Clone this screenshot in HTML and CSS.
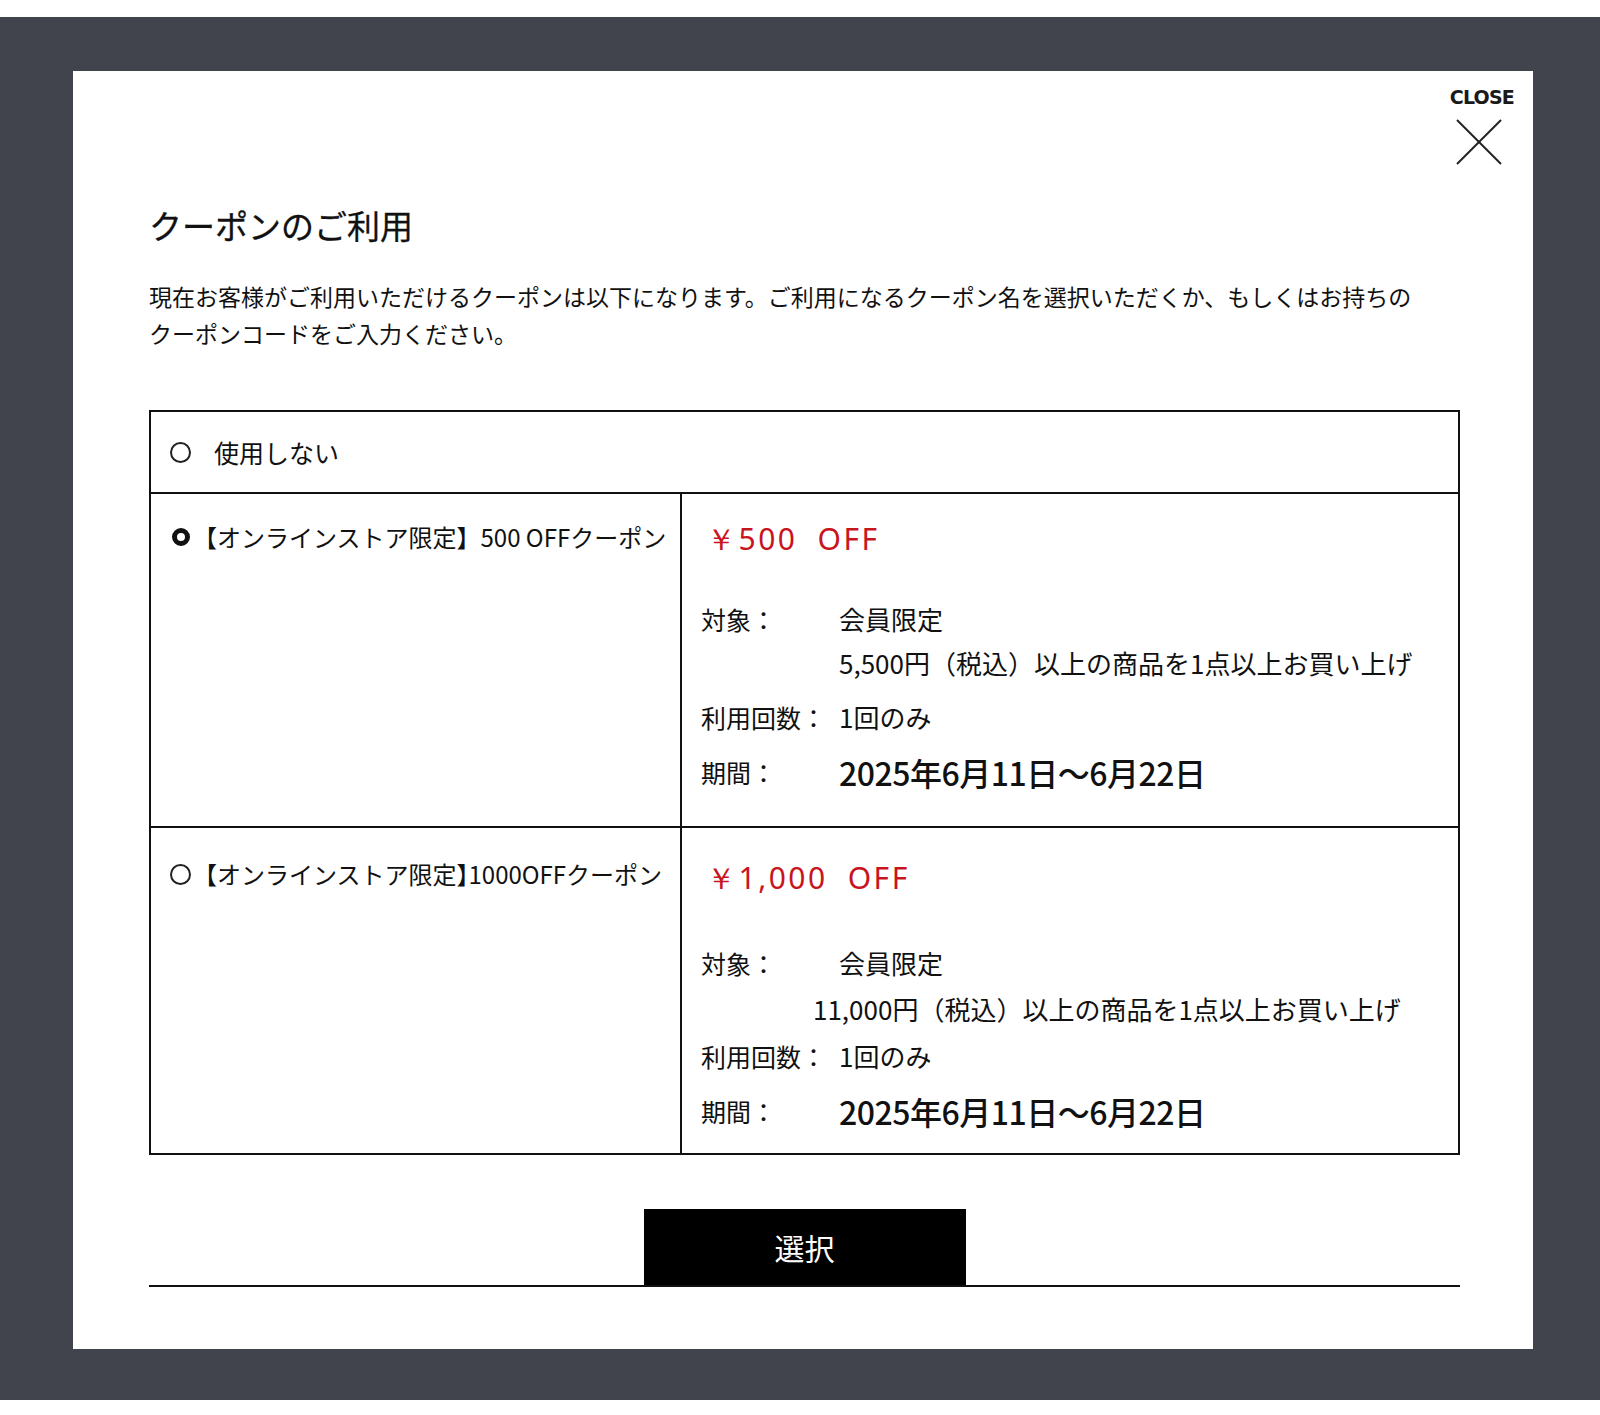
FILE: index.html
```html
<!DOCTYPE html>
<html lang="ja">
<head>
<meta charset="utf-8">
<title>クーポンのご利用</title>
<link rel="stylesheet" href="styles.css">
</head>
<body>
<div class="page">
  <div class="overlay">
    <div class="modal">
      <button class="close" type="button">
        <span class="close-label">CLOSE</span>
        <svg class="close-icon" width="46" height="46" viewBox="0 0 46 46" aria-hidden="true">
          <line x1="1" y1="1" x2="45" y2="45" stroke="#222" stroke-width="2"/>
          <line x1="45" y1="1" x2="1" y2="45" stroke="#222" stroke-width="2"/>
        </svg>
      </button>

      <h1 class="title">クーポンのご利用</h1>
      <p class="lead">現在お客様がご利用いただけるクーポンは以下になります。ご利用になるクーポン名を選択いただくか、もしくはお持ちの<br>クーポンコードをご入力ください。</p>

      <div class="coupons">
        <div class="row-none">
          <span class="radio"></span>
          <span class="none-label">使用しない</span>
        </div>

        <div class="coupon coupon-first">
          <div class="coupon-name">
            <span class="radio radio-checked"></span>
            <span class="name-text">【オンラインストア限定】500 OFFクーポン</span>
          </div>
          <div class="coupon-info">
            <div class="price">￥500<span class="off">OFF</span></div>
            <div class="details">
              <div class="drow"><span class="dlabel">対象：</span><span class="dvalue">会員限定</span></div>
              <div class="drow drow-cont"><span class="dlabel"></span><span class="dvalue">5,500円（税込）以上の商品を1点以上お買い上げ</span></div>
              <div class="drow drow-count"><span class="dlabel">利用回数：</span><span class="dvalue">1回のみ</span></div>
              <div class="drow drow-period"><span class="dlabel">期間：</span><span class="dvalue date">2025年6月11日〜6月22日</span></div>
            </div>
          </div>
        </div>

        <div class="coupon coupon-second">
          <div class="coupon-name">
            <span class="radio"></span>
            <span class="name-text">【オンラインストア限定<span class="half">】</span>1000OFFクーポン</span>
          </div>
          <div class="coupon-info">
            <div class="price">￥1,000<span class="off">OFF</span></div>
            <div class="details">
              <div class="drow"><span class="dlabel">対象：</span><span class="dvalue">会員限定</span></div>
              <div class="drow drow-cont"><span class="dlabel"></span><span class="dvalue shift">11,000円（税込）以上の商品を1点以上お買い上げ</span></div>
              <div class="drow drow-count"><span class="dlabel">利用回数：</span><span class="dvalue">1回のみ</span></div>
              <div class="drow drow-period"><span class="dlabel">期間：</span><span class="dvalue date">2025年6月11日〜6月22日</span></div>
            </div>
          </div>
        </div>
      </div>

      <div class="actions">
        <button class="select" type="button">選択</button>
      </div>
    </div>
  </div>
</div>
</body>
</html>
```

FILE: styles.css
```css
* { box-sizing: border-box; }

html, body {
  margin: 0;
  padding: 0;
  background: #ffffff;
}

body {
  font-family: "Noto Sans CJK JP", "Noto Sans", sans-serif;
  color: #111111;
}

.page {
  padding-top: 17px;
  height: 1415px;
}

.overlay {
  background: #41444c;
  height: 1383px;
  padding: 54px 67px 0 73px;
}

.modal {
  position: relative;
  background: #ffffff;
  width: 1460px;
  height: 1278px;
  padding: 132px 73px 0 76px;
}

.close {
  position: absolute;
  top: 15px;
  right: 19px;
  display: flex;
  flex-direction: column;
  align-items: center;
  background: none;
  border: 0;
  padding: 0;
  cursor: pointer;
}

.close-label {
  font-family: "DejaVu Sans", sans-serif;
  font-weight: 700;
  font-size: 19px;
  line-height: 22px;
  letter-spacing: -0.8px;
  color: #1a1a1a;
}

.close-icon {
  display: block;
  margin-top: 11px;
  margin-right: 6px;
}

.title {
  margin: 0;
  font-size: 33px;
  font-weight: 400;
  line-height: 44px;
  letter-spacing: 0;
  color: #111111;
  -webkit-text-stroke: 0.3px #111111;
}

.lead {
  margin: 31px 0 0;
  font-size: 23px;
  line-height: 37px;
  white-space: nowrap;
  color: #111111;
}

.coupons {
  margin-top: 58px;
  width: 1311px;
  border: 2px solid #111111;
}

.row-none {
  height: 82px;
  display: flex;
  align-items: center;
  padding-left: 19px;
  border-bottom: 2px solid #111111;
}

.radio {
  flex: none;
  display: inline-block;
  width: 21px;
  height: 21px;
  border: 2px solid #222222;
  border-radius: 50%;
  background: #ffffff;
}

.radio-checked {
  width: 18px;
  height: 18px;
  margin: 0 1px 0 2px;
  border: 5.5px solid #111111;
}

.none-label {
  margin-left: 23px;
  font-size: 25px;
  line-height: 30px;
}

.coupon {
  display: flex;
}

.coupon-first {
  border-bottom: 2px solid #111111;
}

.coupon-name {
  flex: none;
  width: 531px;
  border-right: 2px solid #111111;
  display: flex;
  align-items: flex-start;
  padding-left: 19px;
}

.coupon-first .coupon-name { padding-top: 26px; }
.coupon-second .coupon-name { padding-top: 29px; }

.coupon-name .radio {
  margin-top: 7px;
}

.coupon-name .radio-checked {
  margin-top: 8px;
}

.name-text {
  margin-left: 2px;
  font-size: 24px;
  line-height: 34px;
  white-space: nowrap;
}

.half {
  font-feature-settings: "halt" 1;
}

.coupon-info {
  flex: 1;
  padding-left: 19px;
}

.coupon-first .coupon-info { padding-top: 25px; padding-bottom: 32px; }
.coupon-second .coupon-info { padding-top: 30px; padding-bottom: 20px; }

.price {
  font-family: "Noto Sans", sans-serif;
  font-size: 30px;
  line-height: 40px;
  letter-spacing: 2.5px;
  padding-left: 5px;
  color: #c8141c;
}

.off {
  margin-left: 20px;
}

.coupon-first .details { margin-top: 38px; }
.coupon-second .details { margin-top: 43px; }

.drow {
  display: flex;
  align-items: center;
  height: 44px;
}

.coupon-second .drow-cont { margin-top: 2px; }
.coupon-first .drow-count { margin-top: 10px; }
.coupon-second .drow-count { margin-top: 3px; }
.drow-period { margin-top: 11px; }

.dlabel {
  flex: none;
  width: 138px;
  font-size: 25px;
  line-height: 44px;
}

.dvalue {
  font-size: 26px;
  line-height: 44px;
  white-space: nowrap;
}

.shift {
  margin-left: -26px;
}

.date {
  font-size: 32px;
  font-weight: 500;
  letter-spacing: -0.5px;
}

.actions {
  margin-top: 54px;
  width: 1311px;
  display: flex;
  justify-content: center;
  border-bottom: 2px solid #111111;
}

.select {
  width: 322px;
  height: 76px;
  background: #000000;
  color: #ffffff;
  border: 0;
  font-family: "Noto Sans CJK JP", sans-serif;
  font-size: 30px;
  line-height: 76px;
  padding: 0;
  cursor: pointer;
}
```
